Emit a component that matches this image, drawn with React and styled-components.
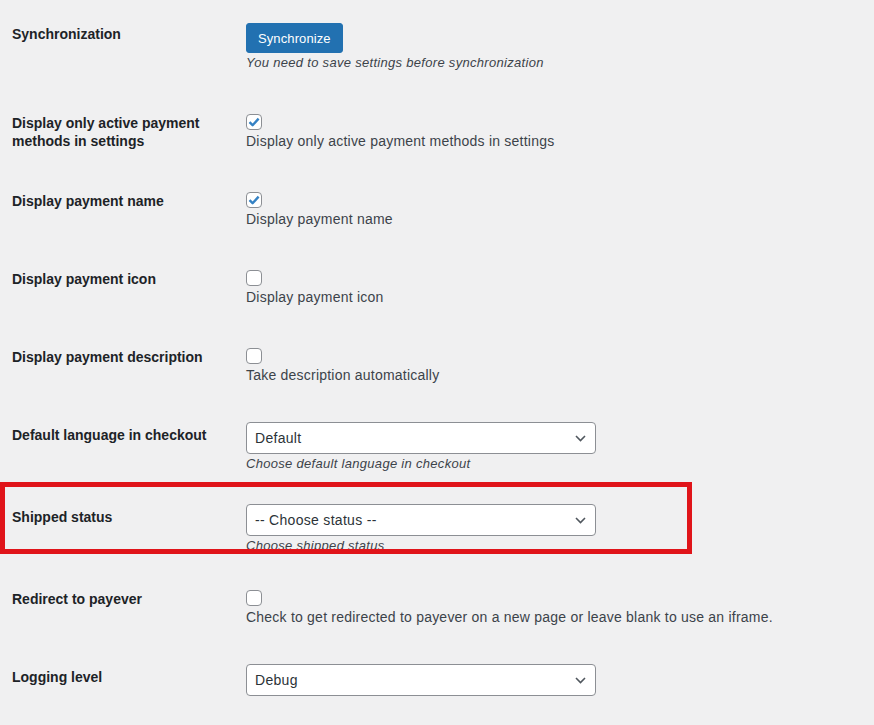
import React from 'react';
import styled, { createGlobalStyle } from 'styled-components';

const GlobalStyle = createGlobalStyle`
  html, body {
    margin: 0;
    padding: 0;
    background: #f0f0f1;
  }
  body {
    font-family: "Liberation Sans", Arial, sans-serif;
    color: #1d2327;
    font-size: 14px;
  }
`;

const Page = styled.div`
  padding-top: 5px;
  width: 874px;
  height: 725px;
  overflow: hidden;
`;

const Row = styled.div`
  position: relative;
  display: grid;
  grid-template-columns: 234px 1fr;
  padding: 20px 0 ${(p) => (p.$tight ? 15 : 22)}px 12px;
`;

const Label = styled.div`
  font-weight: 600;
  font-size: 14px;
  line-height: 18px;
  width: 200px;
  color: #1d2327;
`;

const Field = styled.div`
  display: flex;
  flex-direction: column;
  align-items: flex-start;
  margin-top: ${(p) => p.$offset || 0}px;
`;

const Button = styled.button`
  height: 30px;
  padding: 0 11px;
  border: 1px solid #2271b1;
  border-radius: 3px;
  background: #2271b1;
  color: #fff;
  font-family: inherit;
  font-size: 13px;
  font-weight: 500;
  letter-spacing: 0.1px;
  cursor: pointer;
`;

const Hint = styled.p`
  margin: 1px 0 0;
  font-size: 13px;
  line-height: 18px;
  font-style: italic;
  letter-spacing: 0.3px;
  color: #3c434a;
`;

const CheckText = styled.div`
  margin-top: 2px;
  font-size: 14px;
  line-height: 18px;
  letter-spacing: 0.22px;
  color: #3c434a;
`;

const Box = styled.span`
  display: inline-flex;
  align-items: center;
  justify-content: center;
  box-sizing: border-box;
  width: 16px;
  height: 16px;
  border: 1px solid #8c8f94;
  border-radius: 4px;
  background: #fff;
`;

const Select = styled.div`
  box-sizing: border-box;
  width: 350px;
  height: 32px;
  display: flex;
  align-items: center;
  justify-content: space-between;
  padding: 0 9px 0 8px;
  border: 1px solid #8c8f94;
  border-radius: 4px;
  background: #fff;
  color: #2c3338;
  font-size: 14px;
  letter-spacing: 0.3px;
`;

const Highlight = styled.div`
  position: absolute;
  top: -6px;
  left: 0;
  width: 692px;
  height: 72px;
  box-sizing: border-box;
  border: 5px solid #e0141a;
  pointer-events: none;
`;

const Checkbox = ({ checked }) => (
  <Box>
    {checked && (
      <svg width="12" height="10" viewBox="0 0 12 10">
        <path d="M1.5 5.2 L4.6 8.2 L10.6 1.6" fill="none" stroke="#3582c4" strokeWidth="2.4" strokeLinejoin="round" />
      </svg>
    )}
  </Box>
);

const Chevron = () => (
  <svg width="11" height="7" viewBox="0 0 11 7">
    <path d="M1 1 L5.5 5.5 L10 1" fill="none" stroke="#50575e" strokeWidth="1.6" />
  </svg>
);

const CheckRow = ({ label, checked, text }) => (
  <Row>
    <Label>{label}</Label>
    <Field>
      <Checkbox checked={checked} />
      <CheckText>{text}</CheckText>
    </Field>
  </Row>
);

const SelectRow = ({ label, value, hint, children }) => (
  <Row $tight>
    <Label>{label}</Label>
    <Field $offset={-4}>
      <Select>
        <span>{value}</span>
        <Chevron />
      </Select>
      {hint && <Hint>{hint}</Hint>}
    </Field>
    {children}
  </Row>
);

export default function App() {
  return (
    <Page>
      <GlobalStyle />
      <Row>
        <Label>Synchronization</Label>
        <Field $offset={-2}>
          <Button>Synchronize</Button>
          <Hint>You need to save settings before synchronization</Hint>
        </Field>
      </Row>
      <CheckRow
        label="Display only active payment methods in settings"
        checked
        text="Display only active payment methods in settings"
      />
      <CheckRow label="Display payment name" checked text="Display payment name" />
      <CheckRow label="Display payment icon" text="Display payment icon" />
      <CheckRow label="Display payment description" text="Take description automatically" />
      <SelectRow
        label="Default language in checkout"
        value="Default"
        hint="Choose default language in checkout"
      />
      <SelectRow label="Shipped status" value="-- Choose status --" hint="Choose shipped status">
        <Highlight />
      </SelectRow>
      <CheckRow
        label="Redirect to payever"
        text="Check to get redirected to payever on a new page or leave blank to use an iframe."
      />
      <SelectRow label="Logging level" value="Debug" />
    </Page>
  );
}
